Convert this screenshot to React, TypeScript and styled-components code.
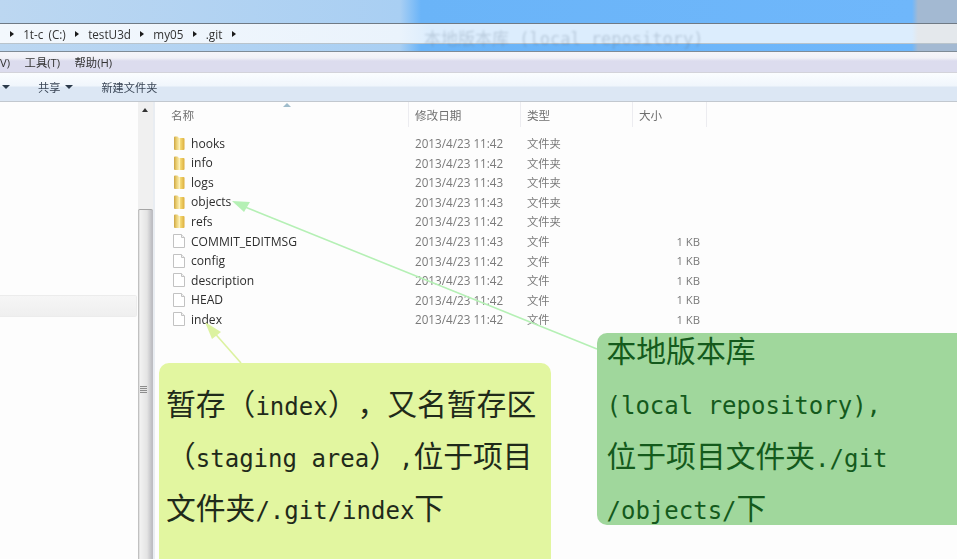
import React from 'react';
import styled, { createGlobalStyle } from 'styled-components';

const GlobalStyle = createGlobalStyle`
  html, body { margin: 0; padding: 0; background: #fdfdfd; }
  body { width: 957px; height: 559px; overflow: hidden; }
`;

const FILES = [
  { name: 'hooks', date: '2013/4/23 11:42', type: '文件夹', size: '', folder: true },
  { name: 'info', date: '2013/4/23 11:42', type: '文件夹', size: '', folder: true },
  { name: 'logs', date: '2013/4/23 11:43', type: '文件夹', size: '', folder: true },
  { name: 'objects', date: '2013/4/23 11:43', type: '文件夹', size: '', folder: true },
  { name: 'refs', date: '2013/4/23 11:42', type: '文件夹', size: '', folder: true },
  { name: 'COMMIT_EDITMSG', date: '2013/4/23 11:43', type: '文件', size: '1 KB', folder: false },
  { name: 'config', date: '2013/4/23 11:42', type: '文件', size: '1 KB', folder: false },
  { name: 'description', date: '2013/4/23 11:42', type: '文件', size: '1 KB', folder: false },
  { name: 'HEAD', date: '2013/4/23 11:42', type: '文件', size: '1 KB', folder: false },
  { name: 'index', date: '2013/4/23 11:42', type: '文件', size: '1 KB', folder: false },
];

const CRUMBS = ['1t-c (C:)', 'testU3d', 'my05', '.git'];

const FolderIcon = () => (
  <svg width="16" height="16" viewBox="0 0 16 16">
    <defs>
      <linearGradient id="folderFill" x1="0" x2="1" y1="0" y2="0">
        <stop offset="0" stopColor="#c9a246" />
        <stop offset="0.18" stopColor="#e6c765" />
        <stop offset="0.5" stopColor="#fbeeb0" />
        <stop offset="0.62" stopColor="#f4d873" />
        <stop offset="1" stopColor="#dcae3c" />
      </linearGradient>
    </defs>
    <path
      d="M3 2.5a1 1 0 0 1 1-1h2.5l1.5 1.5h4.5a1 1 0 0 1 1 1V14a1 1 0 0 1-1 1H4a1 1 0 0 1-1-1z"
      fill="url(#folderFill)"
    />
    <path d="M8.5 3v12" stroke="#fff6cc" strokeWidth="0.8" opacity="0.7" />
  </svg>
);

const FileIcon = () => (
  <svg width="16" height="16" viewBox="0 0 16 16">
    <path d="M2.5 1.5h8l3 3v10h-11z" fill="#fff" stroke="#c2c2c2" />
    <path d="M10.5 1.5v3h3" fill="#f0f0f0" stroke="#c2c2c2" />
  </svg>
);

const Annotations = () => (
  <ArrowLayer width="957" height="559" viewBox="0 0 957 559">
    <line x1="597" y1="349" x2="240" y2="205" stroke="#b5f0b5" strokeWidth="1.6" />
    <polygon points="232,201 250,202 244,212" fill="#b5f0b5" />
    <line x1="241" y1="363" x2="211" y2="329" stroke="#dcf2a0" strokeWidth="1.6" />
    <polygon points="205,322 221,332 212,339" fill="#dcf2a0" />
  </ArrowLayer>
);

export default function App() {
  return (
    <Page>
      <GlobalStyle />
      <Chrome>
        <AddressBar>
          {CRUMBS.map((c) => (
            <React.Fragment key={c}>
              <Chevron />
              <Crumb>{c}</Crumb>
            </React.Fragment>
          ))}
          <Chevron />
        </AddressBar>
        <GhostText>本地版本库 (local repository)</GhostText>
      </Chrome>
      <MenuBar>
        <MenuItem>V)</MenuItem>
        <MenuItem>工具(T)</MenuItem>
        <MenuItem>帮助(H)</MenuItem>
      </MenuBar>
      <Toolbar>
        <Caret />
        <ToolLabel $left={28}>共享</ToolLabel>
        <Caret $left={5} />
        <ToolLabel $left={28}>新建文件夹</ToolLabel>
      </Toolbar>
      <Body>
        <Sidebar>
          <SelectedNode />
        </Sidebar>
        <Scrollbar>
          <ScrollUp />
          <ScrollThumb>
            <Grip />
          </ScrollThumb>
        </Scrollbar>
        <ListPane>
          <HeaderRow>
            <HeaderCell $w={254} $pad={16}>
              名称
              <SortMark />
            </HeaderCell>
            <HeaderCell $w={112} $pad={6}>修改日期</HeaderCell>
            <HeaderCell $w={112} $pad={6}>类型</HeaderCell>
            <HeaderCell $w={74} $pad={6}>大小</HeaderCell>
          </HeaderRow>
          <Rows>
            {FILES.map((f) => (
              <Row key={f.name}>
                <IconSlot>{f.folder ? <FolderIcon /> : <FileIcon />}</IconSlot>
                <Name>{f.name}</Name>
                <DateCell>{f.date}</DateCell>
                <TypeCell>{f.type}</TypeCell>
                <Size>{f.size}</Size>
              </Row>
            ))}
          </Rows>
        </ListPane>
      </Body>

      <Annotations />

      <YellowNote>
        <NoteLine>
          <Han>暂存（</Han><Mono>index</Mono><Han>），又名暂存区</Han>
        </NoteLine>
        <NoteLine>
          <Han>（</Han><Mono>staging area</Mono><Han>）</Han><Mono>,</Mono><Han>位于项目</Han>
        </NoteLine>
        <NoteLine>
          <Han>文件夹</Han><Mono>/.git/index</Mono><Han>下</Han>
        </NoteLine>
      </YellowNote>

      <GreenNote>
        <NoteLine><Han>本地版本库</Han></NoteLine>
        <NoteLine><Mono>(local repository),</Mono></NoteLine>
        <NoteLine><Han>位于项目文件夹</Han><Mono>./git</Mono></NoteLine>
        <NoteLine><Mono>/objects/</Mono><Han>下</Han></NoteLine>
      </GreenNote>
    </Page>
  );
}

const UI_FONT = `"Open Sans", "Noto Sans CJK SC", sans-serif`;

const Page = styled.div`
  position: relative;
  width: 957px;
  height: 559px;
  overflow: hidden;
  display: flex;
  flex-direction: column;
  background: #fdfdfd;
  font-family: ${UI_FONT};
`;

const Chrome = styled.div`
  position: relative;
  height: 52px;
  flex-shrink: 0;
  box-sizing: border-box;
  padding-top: 23px;
  border-bottom: 1px solid #7f8b96;
  background:
    linear-gradient(90deg,
      #bcd7f1 0, #a9cff3 400px, #6ab4f8 421px, #6fb7fb 912px, #a3b9d2 918px, #a3b9d2 100%);
`;

const AddressBar = styled.div`
  display: flex;
  align-items: center;
  height: 19px;
  padding-left: 10px;
  gap: 9.2px;
  border-top: 1px solid #6f7a85;
  border-bottom: 1px solid #b9c4cc;
  background: linear-gradient(90deg, #f3f8fd 0, #eaf3fc 400px, #dcedfd 430px, #dcedfd 912px, #e4e8ec 918px);
`;

const Chevron = styled.span`
  width: 0;
  height: 0;
  border-left: 4px solid #1a1a1a;
  border-top: 3.5px solid transparent;
  border-bottom: 3.5px solid transparent;
`;

const Crumb = styled.span`
  font-size: 11.7px;
  word-spacing: 2px;
  color: #333;
  filter: blur(0.35px);
`;

const GhostText = styled.span`
  position: absolute;
  left: 424px;
  top: 25px;
  font: 17px "DejaVu Sans Mono", "Noto Sans CJK SC", monospace;
  color: #5d7188;
  opacity: 0.28;
  filter: blur(1px);
  white-space: nowrap;
`;

const MenuBar = styled.div`
  display: flex;
  align-items: center;
  height: 21px;
  flex-shrink: 0;
  gap: 14.5px;
  box-sizing: border-box;
  overflow: hidden;
  background: linear-gradient(#f5f5fa 0, #f1f1f7 6px, #dcdcee 9px, #dcdcee 100%);
  border-bottom: 1px solid #d3d3da;
`;

const MenuItem = styled.span`
  font-size: 11.3px;
  color: #333;
  filter: blur(0.35px);
`;

const Toolbar = styled.div`
  display: flex;
  align-items: center;
  height: 29px;
  flex-shrink: 0;
  box-sizing: border-box;
  background: linear-gradient(#fbfdff 0, #f0f6fc 13px, #dce7f4 14px, #dce7f4 100%);
  border-bottom: 1px solid #c2c8cf;
`;

const Caret = styled.span<{ $left?: number }>`
  width: 0;
  height: 0;
  margin-left: ${(p) => p.$left ?? 2}px;
  border-top: 4px solid #2b3a4a;
  border-left: 4px solid transparent;
  border-right: 4px solid transparent;
`;

const ToolLabel = styled.span<{ $left: number }>`
  margin-left: ${(p) => p.$left}px;
  font-size: 11.2px;
  color: #3a4656;
  filter: blur(0.35px);
`;

const Body = styled.div`
  flex: 1;
  display: flex;
  min-height: 0;
`;

const Sidebar = styled.div`
  width: 138px;
  flex-shrink: 0;
  padding-top: 193px;
  background: #fdfdfd;
`;

const SelectedNode = styled.div`
  height: 20px;
  margin-right: 1px;
  background: linear-gradient(#f6f6f6, #efefef);
  border: 1px solid #ececec;
  border-left: 0;
  border-radius: 0 2px 2px 0;
`;

const Scrollbar = styled.div`
  width: 15px;
  flex-shrink: 0;
  display: flex;
  flex-direction: column;
  background: #f0f0f0;
  border-right: 2px solid #e9edf2;
`;

const ScrollUp = styled.span`
  width: 0;
  height: 0;
  margin: 6px 0 0 4px;
  border-bottom: 4px solid #333;
  border-left: 3.5px solid transparent;
  border-right: 3.5px solid transparent;
`;

const ScrollThumb = styled.div`
  margin-top: 97px;
  flex: 1;
  display: flex;
  align-items: flex-start;
  padding-left: 2px;
  background: linear-gradient(90deg, #b0b0b0 0, #f2f2f2 2px, #e4e4e4 9px, #bdbdc2 14px);
  border-top: 1px solid #a5a5a5;
  border-radius: 2px 2px 0 0;
`;

const Grip = styled.span`
  width: 7px;
  height: 7px;
  margin-top: 176px;
  background: repeating-linear-gradient(#8d8d8d 0 1px, #e6e6e6 1px 2px);
`;

const ListPane = styled.div`
  flex: 1;
  display: flex;
  flex-direction: column;
  min-width: 0;
`;

const HeaderRow = styled.div`
  display: flex;
  height: 25px;
  flex-shrink: 0;
`;

const HeaderCell = styled.div<{ $w: number; $pad: number }>`
  position: relative;
  box-sizing: border-box;
  width: ${(p) => p.$w}px;
  padding-left: ${(p) => p.$pad}px;
  border-right: 1px solid #ececf0;
  font-size: 11.6px;
  line-height: 27px;
  color: #6f6f6f;
  filter: blur(0.3px);
`;

const SortMark = styled.span`
  position: absolute;
  left: 128px;
  top: 1px;
  width: 0;
  height: 0;
  border-bottom: 4px solid #9fbccb;
  border-left: 4px solid transparent;
  border-right: 4px solid transparent;
`;

const Rows = styled.div`
  display: flex;
  flex-direction: column;
  padding-top: 6.5px;
`;

const Row = styled.div`
  display: flex;
  align-items: center;
  height: 19.56px;
  filter: blur(0.3px);
`;

const IconSlot = styled.span`
  display: flex;
  width: 16px;
  height: 16px;
  margin-left: 16px;
`;

const Name = styled.span`
  box-sizing: border-box;
  width: 222px;
  padding-left: 4px;
  font-size: 12.1px;
  color: #2e2e2e;
`;

const DateCell = styled.span`
  width: 112px;
  padding-left: 6px;
  box-sizing: border-box;
  font-size: 11.7px;
  color: #7a7a7a;
`;

const TypeCell = styled.span`
  width: 112px;
  padding-left: 6px;
  box-sizing: border-box;
  font-size: 11.3px;
  color: #7a7a7a;
`;

const Size = styled.span`
  width: 74px;
  box-sizing: border-box;
  padding-right: 7px;
  text-align: right;
  font-size: 11.3px;
  color: #7a7a7a;
`;

const ArrowLayer = styled.svg`
  position: absolute;
  left: 0;
  top: 0;
  pointer-events: none;
`;

const YellowNote = styled.div`
  position: absolute;
  left: 159px;
  top: 363px;
  width: 392px;
  height: 210px;
  box-sizing: border-box;
  padding: 12.5px 0 0 7px;
  border-radius: 10px;
  background: #e2f6a0;
  color: #1f2a1a;
`;

const GreenNote = styled.div`
  position: absolute;
  left: 597px;
  top: 333px;
  width: 380px;
  height: 192px;
  box-sizing: border-box;
  padding: 0 0 0 9.5px;
  border-radius: 10px;
  background: #a0d79c;
  color: #145a1c;

  & > div:first-child {
    margin-top: -10px;
  }
`;

const NoteLine = styled.div`
  height: 52.4px;
  line-height: 52.4px;
  font-family: "Noto Sans CJK SC", sans-serif;
  font-size: 29.8px;
  white-space: pre;
  text-spacing-trim: space-all;
`;

const Han = styled.span`
  font-size: 29.8px;
  line-height: 1;
`;

const Mono = styled.span`
  font-family: "DejaVu Sans Mono", monospace;
  font-size: 24px;
  line-height: 1;
`;
